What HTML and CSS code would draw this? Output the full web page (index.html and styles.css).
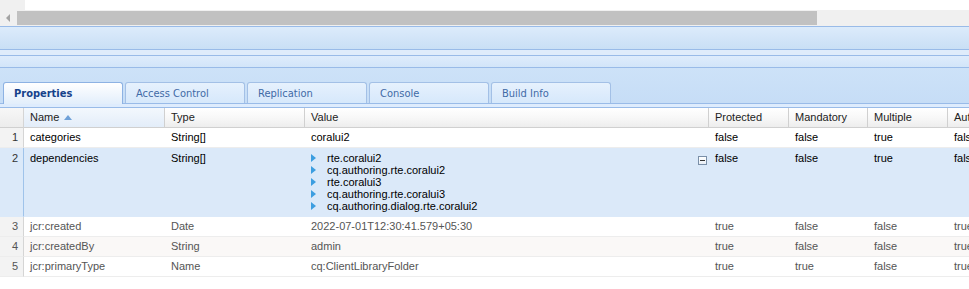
FILE: index.html
```html
<!DOCTYPE html>
<html lang="en">
<head>
    <meta charset="UTF-8">
    <title>Properties</title>
    <link rel="stylesheet" href="styles.css">
</head>
<body>

    <div class="top-space"><div class="corner"></div></div>

    <div class="hscroll">
        <span class="hscroll-arrow"></span>
        <div class="hscroll-thumb"></div>
    </div>

    <div class="panel-head"></div>
    <div class="panel-gap"></div>
    <div class="toolbar"></div>

    <div class="tabstrip">
        <div class="tab active">Properties</div>
        <div class="tab">Access Control</div>
        <div class="tab">Replication</div>
        <div class="tab">Console</div>
        <div class="tab">Build Info</div>
    </div>
    <div class="tab-body-top"></div>

    <table class="grid">
        <colgroup>
            <col style="width:24px">
            <col style="width:141px">
            <col style="width:140px">
            <col style="width:404px">
            <col style="width:80px">
            <col style="width:79px">
            <col style="width:80px">
            <col style="width:100px">
        </colgroup>
        <thead>
            <tr>
                <th class="num"></th>
                <th class="sorted">Name <span class="sort-arrow"></span></th>
                <th>Type</th>
                <th>Value</th>
                <th>Protected</th>
                <th>Mandatory</th>
                <th>Multiple</th>
                <th>Auto Created</th>
            </tr>
        </thead>
        <tbody>
            <tr>
                <td class="num">1</td>
                <td>categories</td>
                <td>String[]</td>
                <td>coralui2</td>
                <td>false</td>
                <td>false</td>
                <td>true</td>
                <td>false</td>
            </tr>
            <tr class="selected">
                <td class="num">2</td>
                <td>dependencies</td>
                <td>String[]</td>
                <td class="multi-cell">
                    <div class="multi">
                        <ul class="values">
                            <li>rte.coralui2</li>
                            <li>cq.authoring.rte.coralui2</li>
                            <li>rte.coralui3</li>
                            <li>cq.authoring.rte.coralui3</li>
                            <li>cq.authoring.dialog.rte.coralui2</li>
                        </ul>
                        <span class="collapse-icon"></span>
                    </div>
                </td>
                <td>false</td>
                <td>false</td>
                <td>true</td>
                <td>false</td>
            </tr>
            <tr class="protected">
                <td class="num">3</td>
                <td>jcr:created</td>
                <td>Date</td>
                <td>2022-07-01T12:30:41.579+05:30</td>
                <td>true</td>
                <td>false</td>
                <td>false</td>
                <td>true</td>
            </tr>
            <tr class="protected alt">
                <td class="num">4</td>
                <td>jcr:createdBy</td>
                <td>String</td>
                <td>admin</td>
                <td>true</td>
                <td>false</td>
                <td>false</td>
                <td>true</td>
            </tr>
            <tr class="protected">
                <td class="num">5</td>
                <td>jcr:primaryType</td>
                <td>Name</td>
                <td>cq:ClientLibraryFolder</td>
                <td>true</td>
                <td>true</td>
                <td>false</td>
                <td>true</td>
            </tr>
        </tbody>
    </table>

</body>
</html>
```

FILE: styles.css
```css
/* Base page */
body {
    margin: 0;
    overflow: hidden;
    background-color: #fff;
    font-family: "Liberation Sans", Arial, sans-serif;
}

/* Top white area + scrollbar */
.top-space {
    height: 10px;
    background-color: #fff;
}
.top-space .corner {
    width: 25px;
    height: 10px;
    background-color: #f0f0f0;
}
.hscroll {
    height: 16px;
    background-color: #f0f0f0;
    display: flex;
    align-items: center;
}
.hscroll-arrow {
    width: 0;
    height: 0;
    margin: 0 7px 0 6px;
    border-top: 4px solid transparent;
    border-bottom: 4px solid transparent;
    border-right: 4px solid #a3a3a3;
}
.hscroll-thumb {
    width: 800px;
    height: 14px;
    background-color: #c1c1c1;
}

/* Panel headers / toolbars */
.panel-head {
    height: 22px;
    border-top: 1px solid #99bbe8;
    border-bottom: 1px solid #99bbe8;
    background: linear-gradient(#dcebfb, #c9dff5);
}
.panel-gap {
    height: 5px;
    background-color: #dfecfb;
}
.toolbar {
    height: 11px;
    border-top: 1px solid #99bbe8;
    border-bottom: 1px solid #99bbe8;
    background: linear-gradient(#deecfc, #d2e5f9);
}

/* Tabs */
.tabstrip {
    height: 21px;
    padding: 14px 0 0 3px;
    display: flex;
    gap: 2px;
    border-bottom: 1px solid #99bbe8;
    background: linear-gradient(#cde2f8, #c6ddf6);
}
.tab {
    width: 108px;
    height: 20px;
    padding: 0 0 0 10px;
    border: 1px solid #a3c0e6;
    border-bottom: none;
    border-radius: 3px 3px 0 0;
    background: linear-gradient(#e6f1fd, #d6e8fb);
    color: #3f6aa6;
    font: 11px/21px "DejaVu Sans Condensed", Tahoma, sans-serif;
}
.tab.active {
    height: 21px;
    margin-bottom: -1px;
    border-color: #8db2e3;
    background: linear-gradient(#ffffff, #e2eefb);
    color: #15428b;
    font-weight: bold;
}
.tab-body-top {
    height: 3px;
    border-bottom: 1px solid #99bbe8;
    background-color: #deecfd;
}

/* Property grid */
.grid {
    table-layout: fixed;
    width: 1048px;
    border-collapse: separate;
    border-spacing: 0;
    font-size: 11px;
}
.grid th,
.grid td {
    box-sizing: border-box;
}
.grid th {
    height: 20px;
    padding: 0 6px;
    line-height: 19px;
    text-align: left;
    font-weight: normal;
    color: #222;
    border-right: 1px solid #d0d0d0;
    border-bottom: 1px solid #d0d0d0;
    background: linear-gradient(#ffffff, #f8f8f8 50%, #ededed);
    white-space: nowrap;
    overflow: hidden;
}
.grid th.sorted {
    background: linear-gradient(#f3f8fd, #e3edf9);
}
.sort-arrow {
    display: inline-block;
    margin-left: 2px;
    vertical-align: 1px;
    border-left: 4px solid transparent;
    border-right: 4px solid transparent;
    border-bottom: 5px solid #6fa1d8;
}
.grid td {
    height: 20px;
    padding: 3px 6px;
    line-height: 13px;
    vertical-align: top;
    color: #000;
    border-bottom: 1px solid #ededed;
    white-space: nowrap;
    overflow: hidden;
}
.grid td.num,
.grid th.num {
    padding: 0 5px 0 0;
    text-align: right;
    color: #333;
    background: #f3f3f3;
    border-right: 1px solid #d5d5d5;
}
.grid td.num {
    padding-top: 3px;
}
.grid th.num {
    background: linear-gradient(#f7f7f7, #ececec);
}

/* Row states */
.grid tr.selected td {
    padding-top: 4px;
    background-color: #dbe9f9;
    border-bottom-color: #dbe9f9;
}
.grid tr.selected td.multi-cell {
    padding-bottom: 4px;
}
.grid tr.selected td.num {
    background-color: #dbe9f9;
    border-right-color: #9fc3ea;
}
.grid tr.protected td {
    color: #555;
}
.grid tr.alt td {
    background-color: #faf8f7;
}
.grid tr.alt td.num {
    background-color: #f3f3f3;
}

/* Multi-value cell */
.multi {
    display: flex;
    align-items: flex-start;
}
.values {
    margin: 0;
    padding: 0;
    list-style: none;
}
.values li {
    position: relative;
    height: 12px;
    padding-left: 16px;
    line-height: 12px;
}
.values li::before {
    content: "";
    position: absolute;
    left: 0;
    top: 2px;
    border-top: 4px solid transparent;
    border-bottom: 4px solid transparent;
    border-left: 5px solid #3d9ee0;
}
.collapse-icon {
    position: relative;
    width: 7px;
    height: 7px;
    margin: 4px -4px 0 auto;
    border: 1px solid #7a8fa8;
    background: linear-gradient(#ffffff, #e8eef5);
}
.collapse-icon::after {
    content: "";
    position: absolute;
    left: 1px;
    top: 3px;
    width: 5px;
    height: 1px;
    background-color: #333;
}
```
